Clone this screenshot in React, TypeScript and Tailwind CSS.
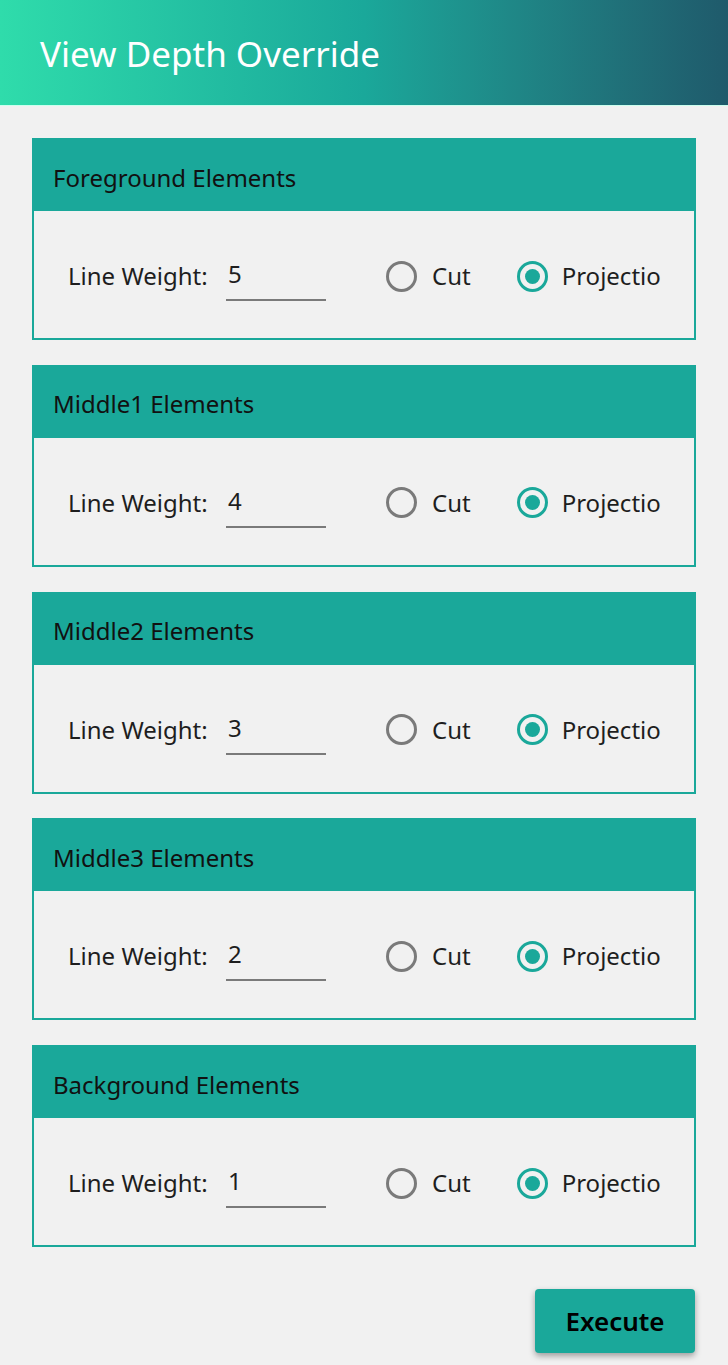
import React from "react";

const groups = [
  { name: "Foreground Elements", value: "5" },
  { name: "Middle1 Elements", value: "4" },
  { name: "Middle2 Elements", value: "3" },
  { name: "Middle3 Elements", value: "2" },
  { name: "Background Elements", value: "1" },
];

function Card({ name, value }: { name: string; value: string }) {
  return (
    <div className="h-[202px] border-2 border-[#1aa89a] flex flex-col">
      <div className="h-[73px] -mx-[2px] -mt-[2px] bg-[#1aa89a] flex items-center pl-[21px] pt-[6px] text-[24px] text-[#111]">
        {name}
      </div>
      <div className="flex-1 flex items-center pl-[34px] pt-[3px]">
        <span className="text-[24px] text-[#1e1e1e] w-[158px]">Line Weight:</span>
        <div className="w-[100px] h-[50px] border-b-2 border-[#7a7a7a] flex items-center pl-[2px] pb-[2px] text-[24px] text-[#1e1e1e]">
          {value}
        </div>
        <div className="ml-[60px] flex items-center">
          <span className="w-[31px] h-[31px] rounded-full border-[3px] border-[#7a7a7a]" />
          <span className="ml-[15px] text-[24px] text-[#1e1e1e]">Cut</span>
        </div>
        <div className="ml-[46px] flex items-center">
          <span className="w-[31px] h-[31px] rounded-full border-[3px] border-[#1aa89a] flex items-center justify-center">
            <span className="w-[15px] h-[15px] rounded-full bg-[#1aa89a]" />
          </span>
          <span className="ml-[14px] text-[24px] text-[#1e1e1e] whitespace-nowrap">Projectio</span>
        </div>
      </div>
    </div>
  );
}

export default function App() {
  return (
    <div className="w-[728px] h-[1365px] bg-[#f1f1f1] flex flex-col" style={{ fontFamily: '"Noto Sans", "Open Sans", sans-serif' }}>
      <div className="h-[106px] flex items-center pl-[40px] pt-[4px] bg-gradient-to-r from-[#2fdcab] via-[#1aa89a] to-[#1f5a6b] text-white text-[35px] border-b border-[#cfe]">
        View Depth Override
      </div>
      <div className="px-[32px] pt-[32px] flex flex-col gap-[24.75px]">
        {groups.map((g) => (
          <Card key={g.name} {...g} />
        ))}
      </div>
      <div className="flex justify-end pr-[33px] mt-[42px]">
        <button className="w-[160px] h-[64px] rounded-[4px] bg-[#1aa89a] text-[26px] font-semibold text-black shadow-[0_3px_6px_rgba(0,0,0,0.35)]">
          Execute
        </button>
      </div>
    </div>
  );
}
